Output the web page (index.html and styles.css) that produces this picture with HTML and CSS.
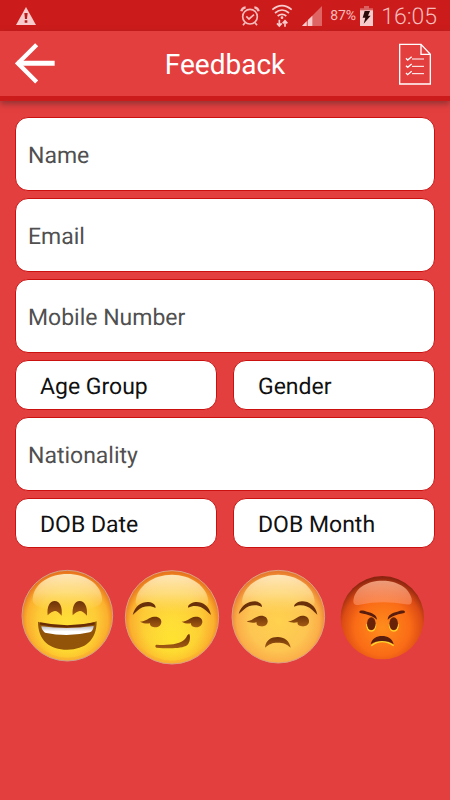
FILE: index.html
```html
<!DOCTYPE html>
<html lang="en">
<head>
<meta charset="utf-8">
<meta name="viewport" content="width=device-width, initial-scale=1">
<title>Feedback</title>
<link rel="stylesheet" href="styles.css">
</head>
<body>
<div class="status">
  <svg class="status-warning" width="20" height="18" viewBox="0 0 60 54" aria-hidden="true"><path d="M30 0L60 54H0Z" fill="#f8cccc"/><path d="M25 18h10l-2 18h-6zM26 40h8v7h-8z" fill="#b81c1c"/></svg>
  <div class="status-right">
    <svg width="20" height="20" viewBox="0 0 60 60" fill="none" stroke="#f4bcbc" stroke-width="5" aria-hidden="true"><circle cx="30" cy="32" r="22"/><path d="M19 31l8 8 15-13M15 50l-6 8M45 50l6 8"/><path d="M4 16Q6 5 17 4M43 4Q54 5 56 16" stroke-width="7"/></svg>
    <svg class="wifi" width="22" height="24" viewBox="0 0 66 72" fill="none" stroke="#f8cccc" stroke-width="5" aria-hidden="true"><path d="M4 17Q33-7 62 17M12 27Q33 9 54 27M20 36Q33 26 46 36"/><circle cx="33" cy="41" r="4" fill="#f8cccc" stroke="none"/><path d="M25 47v18M18 58l7 8 7-8M42 68V51M35 58l7-8 7 8"/></svg>
    <svg class="signal" width="20" height="20" viewBox="0 0 60 60" aria-hidden="true"><path d="M0 60L60 0v60Z" fill="#df6565"/><path d="M0 60L14 46V60ZM18 60V42L31 29V60Z" fill="#f8cccc"/></svg>
    <span class="percent">87%</span>
    <svg class="battery" width="13" height="20" viewBox="0 0 39 60" aria-hidden="true"><path d="M12 0h15v7h12v12H0V7h12z" fill="#d96161"/><path d="M0 13h39v47H0Z" fill="#f8cccc"/><path d="M14 15h16l-6 14h8L11 53l5-18H8Z" fill="#2b0909"/></svg>
    <time class="clock">16:05</time>
  </div>
</div>
<header class="toolbar">
  <button class="icon-button" type="button" aria-label="Back"><svg width="41" height="41" viewBox="0 0 123 123" fill="none" stroke="#fff" aria-hidden="true"><path d="M65 5L9 61L65 117" stroke-width="13"/><path d="M7 61H119" stroke-width="15"/></svg></button>
  <h1>Feedback</h1>
  <button class="icon-button" type="button" aria-label="Form list"><svg width="32" height="42" viewBox="0 0 96 126" fill="none" stroke="#fff" stroke-width="4" aria-hidden="true"><path d="M2 4H66L94 34V123H2ZM66 4V34H94"/><path d="M39 48H75M39 70H75M39 92H75" stroke-width="3"/><path d="M21 46l5 5 12-10M21 68l5 5 12-10M21 90l5 5 12-10"/></svg></button>
</header>
<main>
<form>
  <div class="fields">
    <input class="field wide" type="text" placeholder="Name" aria-label="Name">
    <input class="field wide" type="email" placeholder="Email" aria-label="Email">
    <input class="field wide" type="tel" placeholder="Mobile Number" aria-label="Mobile Number">
    <select class="field" aria-label="Age Group"><option>Age Group</option></select>
    <select class="field" aria-label="Gender"><option>Gender</option></select>
    <input class="field wide" type="text" placeholder="Nationality" aria-label="Nationality">
    <select class="field" aria-label="DOB Date"><option>DOB Date</option></select>
    <select class="field" aria-label="DOB Month"><option>DOB Month</option></select>
  </div>
  <div class="ratings">
    <button class="rating" type="button" aria-label="Happy">
      <svg viewBox="0 0 321 330" aria-hidden="true">
        <defs>
          <radialGradient id="face" cx=".5" cy=".55" r=".53"><stop offset="0" stop-color="#ffd83c"/><stop offset=".6" stop-color="#fdcb36"/><stop offset=".84" stop-color="#fbb02e"/><stop offset="1" stop-color="#e8741d"/></radialGradient>
          <radialGradient id="face-peach" cx=".5" cy=".55" r=".53"><stop offset="0" stop-color="#ffd24e"/><stop offset=".6" stop-color="#fdc552"/><stop offset=".84" stop-color="#fbae48"/><stop offset="1" stop-color="#e87a2c"/></radialGradient>
          <radialGradient id="low" cx=".5" cy=".78" r=".42"><stop offset="0" stop-color="#fff02b" stop-opacity=".6"/><stop offset="1" stop-color="#fff02b" stop-opacity="0"/></radialGradient>
          <linearGradient id="shine" x1="0" y1="0" x2="0" y2="1"><stop offset="0" stop-color="#fff0ca" stop-opacity=".9"/><stop offset=".5" stop-color="#ffe7a0" stop-opacity=".65"/><stop offset="1" stop-color="#ffe070" stop-opacity="0"/></linearGradient>
          <linearGradient id="brown" x1="0" y1="0" x2="0" y2="1"><stop offset="0" stop-color="#6d3208"/><stop offset="1" stop-color="#a45c13"/></linearGradient>
          <linearGradient id="teeth" x1="0" y1="0" x2="0" y2="1"><stop offset="0" stop-color="#b8b8c0"/><stop offset=".6" stop-color="#fff"/></linearGradient>
        </defs>
        <circle cx="172" cy="167" r="136" fill="url(#face)" stroke="#cfa18a" stroke-width="3"/>
        <circle cx="172" cy="167" r="126" fill="url(#low)"/>
        <path d="M68 120C68 72 118 42 172 42S276 72 276 120C276 165 68 165 68 120Z" fill="url(#shine)"/>
        <path d="M113 166C110 140 119 123 134 123S158 140 155 167Q143 152 134 153T113 166ZM188 166C186 140 194 123 209 123S233 140 231 167Q218 152 209 153T188 166Z" fill="url(#brown)"/>
        <path d="M84 185C130 202 213 202 260 184C260 241 225 269 172 269S84 241 84 185Z" fill="#925409"/>
        <path d="M90 190Q172 208 254 190" fill="none" stroke="#672b06" stroke-width="7"/>
        <path d="M94 199Q172 210 251 198Q250 213 239 217Q172 233 105 218Q95 211 94 199Z" fill="url(#teeth)"/>
      </svg>
    </button>
    <button class="rating" type="button" aria-label="Satisfied">
      <svg viewBox="0 0 321 330" aria-hidden="true">
        <circle cx="165" cy="172" r="140" fill="url(#face)" stroke="#dca083" stroke-width="3"/>
        <circle cx="165" cy="172" r="130" fill="url(#low)"/>
        <path d="M56 126C58 78 110 44 165 44S272 78 274 126C274 171 56 171 56 126Z" fill="url(#shine)"/>
        <g fill="#693009"><path d="M47 165C55 136 74 125 95 126C108 127 119 138 115 144C103 136 76 136 61 152ZM214 143C210 137 222 127 236 126C257 125 277 138 282 165L266 151C252 138 231 134 214 143Z"/></g>
        <g fill="url(#brown)"><path d="M69 185C86 185 96 171 111 170C126 169 134 177 133 187C132 197 124 203 112 202C103 201 98 197 99 190C89 192 79 190 69 185Z"/><path d="M194 185C211 185 219 171 235 170C250 169 257 177 256 187C255 197 246 203 235 202C226 201 221 197 222 190C212 192 203 190 194 185Z"/><path d="M118 254C157 257 190 252 204 237C210 231 210 223 217 222C221 231 219 247 211 255C194 268 148 265 118 263C114 260 114 256 118 254Z"/></g>
      </svg>
    </button>
    <button class="rating" type="button" aria-label="Dissatisfied">
      <svg viewBox="0 0 321 330" aria-hidden="true">
        <circle cx="163" cy="170" r="139" fill="url(#face-peach)" stroke="#dca083" stroke-width="3"/>
        <path d="M54 126C56 78 108 44 163 44S270 78 272 126C272 171 54 171 54 126Z" fill="url(#shine)"/>
        <g fill="#693009"><path d="M44 162C52 135 72 124 93 124C106 125 117 136 113 141C101 133 74 133 59 149ZM211 140C208 134 220 125 234 124C256 124 275 138 280 164L264 149C250 136 229 131 211 140Z"/></g>
        <g fill="url(#brown)"><path d="M68 184C84 184 95 168 111 167C125 167 132 175 131 186C130 195 122 200 111 199C102 198 96 194 98 187C87 189 77 189 68 184Z"/><path d="M192 184C209 184 219 168 235 167C249 167 256 175 255 186C254 195 244 200 234 199C225 198 219 194 221 187C211 189 202 189 192 184Z"/><path d="M123 263C125 240 142 231 161 231S197 243 200 263C187 251 178 248 161 248S136 252 123 263Z"/></g>
      </svg>
    </button>
    <button class="rating" type="button" aria-label="Angry">
      <svg viewBox="0 0 321 330" aria-hidden="true">
        <defs>
          <radialGradient id="angry" cx=".5" cy=".62" r=".6"><stop offset="0" stop-color="#ff8d1c"/><stop offset=".55" stop-color="#fa6c16"/><stop offset=".8" stop-color="#dc4b14"/><stop offset="1" stop-color="#8c240f"/></radialGradient>
          <linearGradient id="angry-shine" x1="0" y1="0" x2="0" y2="1"><stop offset="0" stop-color="#f5a886" stop-opacity=".9"/><stop offset="1" stop-color="#ff9364" stop-opacity=".6"/></linearGradient>
        </defs>
        <circle cx="154" cy="173" r="125" fill="url(#angry)"/>
        <path d="M68 116C74 84 108 62 154 62S235 84 242 116C244 131 239 136 224 133Q154 120 86 134C70 137 65 131 68 116Z" fill="url(#angry-shine)"/>
        <g fill="none" stroke="#ffd72e" stroke-width="4"><path d="M107 193C108 220 133 220 134 193M175 193C176 220 201 220 202 193M121 257Q153 232 188 257"/></g>
        <ellipse cx="121" cy="191" rx="13" ry="19" fill="#682208"/><ellipse cx="188" cy="191" rx="13" ry="19" fill="#682208"/>
        <g fill="#591c0d"><path d="M85 155C87 149 98 151 108 155C124 159 137 164 138 179C128 171 117 166 105 163C94 160 84 160 85 155ZM222 155C220 149 209 151 199 155C183 159 171 164 170 179C180 171 191 166 202 163C213 160 223 160 222 155ZM119 253C123 235 137 228 153 228S184 235 188 253C177 246 168 243 153 243S130 246 119 253Z"/></g>
      </svg>
    </button>
  </div>
</form>
</main>
</body>
</html>
```
FILE: styles.css
```css
* { box-sizing: border-box; }

body {
  margin: 0;
  min-height: 100vh;
  background: #e43f3f;
  font-family: Roboto, "Liberation Sans", sans-serif;
  text-rendering: geometricPrecision;
}

button, input, select {
  font: inherit;
  text-rendering: inherit;
}

svg { display: block; }

.status {
  display: flex;
  justify-content: space-between;
  align-items: center;
  height: 31px;
  padding: 0 13px 0 16px;
  background: #cb1c1b;
  color: #f4bcbc;
}

.status-right {
  display: flex;
  align-items: center;
}

.wifi { margin-left: 11px; }
.signal { margin-left: 9px; }

.percent {
  margin-left: 8px;
  font-size: 14px;
}

.battery { margin-left: 4px; }

.clock {
  margin-left: 8px;
  padding-top: 2px;
  font-size: 23px;
  font-weight: 300;
  line-height: 29px;
}

.toolbar {
  position: relative;
  display: grid;
  grid-template-columns: 52px 1fr 48px;
  align-items: center;
  height: 70px;
  padding: 0 19px 0 15px;
  border-bottom: 5px solid #cb1c1b;
  box-shadow: 0 3px 6px rgba(70, 40, 40, .5);
}

.toolbar h1 {
  margin: 0;
  padding-top: 2px;
  color: #fff;
  font-size: 28px;
  font-weight: 400;
  line-height: 36px;
  text-align: center;
}

.icon-button {
  padding: 0;
  border: 0;
  background: none;
}

.icon-button:last-child { justify-self: end; }

main { padding: 16px 0; }

.fields {
  display: grid;
  grid-template-columns: 1fr 1fr;
  gap: 7px 16px;
  padding: 0 15px;
}

.field {
  width: 100%;
  min-width: 0;
  height: 50px;
  padding: 2px 24px 0;
  appearance: none;
  border: 1px solid #cb1010;
  border-radius: 13px;
  background: #fff;
  color: #111;
  font-size: 23px;
}

.wide {
  grid-column: 1 / -1;
  height: 74px;
  padding: 2px 12px 0;
}

.field::placeholder {
  color: #505050;
  opacity: 1;
}

.ratings {
  display: grid;
  grid-template-columns: repeat(4, 1fr);
  margin-top: 12px;
  padding: 0 12px 0 10px;
}

.rating {
  padding: 0;
  border: 0;
  background: none;
}
```
